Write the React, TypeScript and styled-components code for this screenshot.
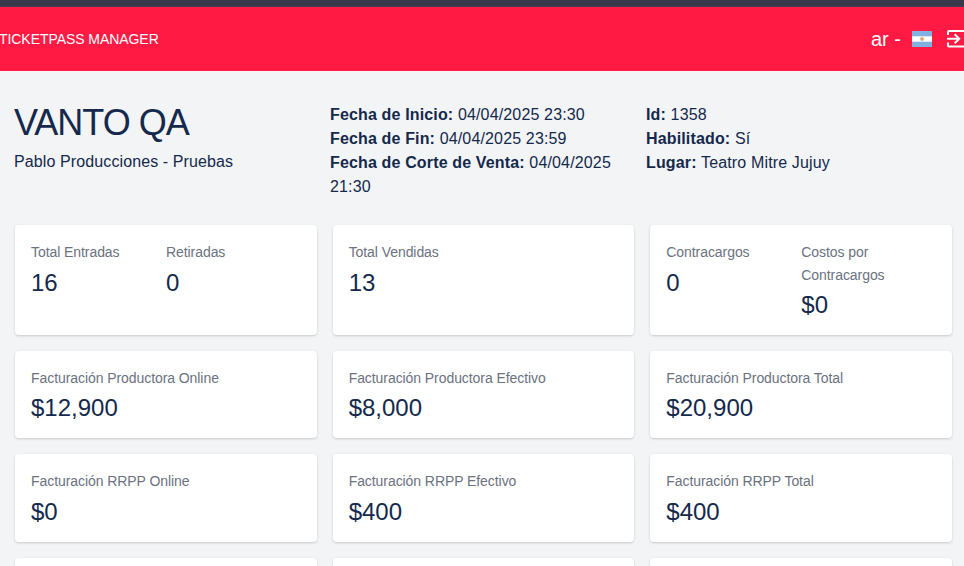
import React from "react";
import styled, { createGlobalStyle } from "styled-components";

const Global = createGlobalStyle`
  html, body { margin: 0; padding: 0; height: 100%; overflow: hidden; background: #f3f4f6; }
  body { font-family: "Liberation Sans", Arial, sans-serif; color: #14294b; }
  * { box-sizing: border-box; }
`;

const Page = styled.div`
  width: 964px;
  height: 566px;
  overflow: hidden;
`;
const TopStrip = styled.div`
  height: 7px;
  background: #373849;
  border-bottom: 1px solid #3f3f4f;
`;
const Header = styled.header`
  height: 64px;
  background: #ff1a44;
  color: #fff;
  display: flex;
  align-items: center;
  justify-content: space-between;
`;
const Brand = styled.div`
  font-size: 14px;
  line-height: 20px;
  letter-spacing: -0.06px;
  margin-left: -1px;
  margin-top: -1px;
`;
const HeaderRight = styled.div`
  display: flex;
  align-items: center;
  font-size: 20px;
  line-height: 28px;
  margin-right: -2px;
`;
const Lang = styled.span`
  margin-right: 11px;
`;
const Info = styled.section`
  display: grid;
  grid-template-columns: 316px 316px 1fr;
  padding: 32px 14px 0 14px;
  height: 154.2px;
`;
const Title = styled.h1`
  margin: 0;
  font-size: 36px;
  line-height: 40px;
  font-weight: 400;
  letter-spacing: -1px;
`;
const Sub = styled.div`
  font-size: 16px;
  line-height: 24px;
  margin-top: 7px;
  letter-spacing: 0.11px;
`;
const Meta = styled.div`
  font-size: 16px;
  line-height: 24px;
  width: 290px;
  letter-spacing: 0.15px;
`;
const Cards = styled.section`
  display: grid;
  grid-template-columns: repeat(3, 1fr);
  gap: 16px;
  width: 937px;
  margin-left: 15px;
`;
const Card = styled.div<{ $h: number; $split?: boolean }>`
  height: ${(p) => p.$h}px;
  background: #fff;
  border-radius: 4px;
  box-shadow: 0 1px 3px rgba(0, 0, 0, 0.12), 0 1px 2px rgba(0, 0, 0, 0.06);
  padding: 16.25px 16px;
  display: grid;
  grid-template-columns: ${(p) => (p.$split ? "135px 1fr" : "1fr")};
`;
const Stat = styled.div``;
const Label = styled.div`
  font-size: 14px;
  line-height: 22.75px;
  color: #6b7280;
  letter-spacing: -0.07px;
`;
const Value = styled.div<{ $tight?: boolean }>`
  font-size: 24px;
  line-height: 32px;
  margin-top: ${(p) => (p.$tight ? "2px" : "2.625px")};
`;

const Flag = () => (
  <svg width="20" height="16" viewBox="0 0 20 16" style={{ display: "block" }}>
    <rect width="20" height="16" fill="#7fb2e0" />
    <rect y="5.3" width="20" height="5.4" fill="#fff" />
    <circle cx="10" cy="8" r="1.9" fill="#e6a56c" />
  </svg>
);

const Exit = () => (
  <svg width="20" height="20" viewBox="0 0 20 20" fill="none" stroke="#fff" strokeWidth="2" style={{ display: "block", marginLeft: 14 }}>
    <path d="M2 6V3a1 1 0 0 1 1-1h17M20 17.5H3a1 1 0 0 1-1-1V13.5" />
    <path d="M1 9.8h12M8.7 5.3l4.5 4.5-4.5 4.5" />
  </svg>
);

const S = ({ l, v, tight }: { l: string; v: string; tight?: boolean }) => (
  <Stat>
    <Label>{l}</Label>
    <Value $tight={tight}>{v}</Value>
  </Stat>
);

export default function App() {
  return (
    <Page>
      <Global />
      <TopStrip />
      <Header>
        <Brand>TICKETPASS MANAGER</Brand>
        <HeaderRight>
          <Lang>ar -</Lang>
          <Flag />
          <Exit />
        </HeaderRight>
      </Header>
      <Info>
        <div>
          <Title>VANTO QA</Title>
          <Sub>Pablo Producciones - Pruebas</Sub>
        </div>
        <Meta>
          <div><b>Fecha de Inicio:</b> 04/04/2025 23:30</div>
          <div><b>Fecha de Fin:</b> 04/04/2025 23:59</div>
          <div><b>Fecha de Corte de Venta:</b> 04/04/2025 21:30</div>
        </Meta>
        <Meta>
          <div><b>Id:</b> 1358</div>
          <div><b>Habilitado:</b> Sí</div>
          <div><b>Lugar:</b> Teatro Mitre Jujuy</div>
        </Meta>
      </Info>
      <Cards>
        <Card $h={109.5} $split><S l="Total Entradas" v="16" /><S l="Retiradas" v="0" /></Card>
        <Card $h={109.5}><S l="Total Vendidas" v="13" /></Card>
        <Card $h={109.5} $split><S l="Contracargos" v="0" /><S l="Costos por Contracargos" v="$0" tight /></Card>
        <Card $h={87.5}><S l="Facturación Productora Online" v="$12,900" /></Card>
        <Card $h={87.5}><S l="Facturación Productora Efectivo" v="$8,000" /></Card>
        <Card $h={87.5}><S l="Facturación Productora Total" v="$20,900" /></Card>
        <Card $h={87.5}><S l="Facturación RRPP Online" v="$0" /></Card>
        <Card $h={87.5}><S l="Facturación RRPP Efectivo" v="$400" /></Card>
        <Card $h={87.5}><S l="Facturación RRPP Total" v="$400" /></Card>
        <Card $h={87.5} />
        <Card $h={87.5} />
        <Card $h={87.5} />
      </Cards>
    </Page>
  );
}
